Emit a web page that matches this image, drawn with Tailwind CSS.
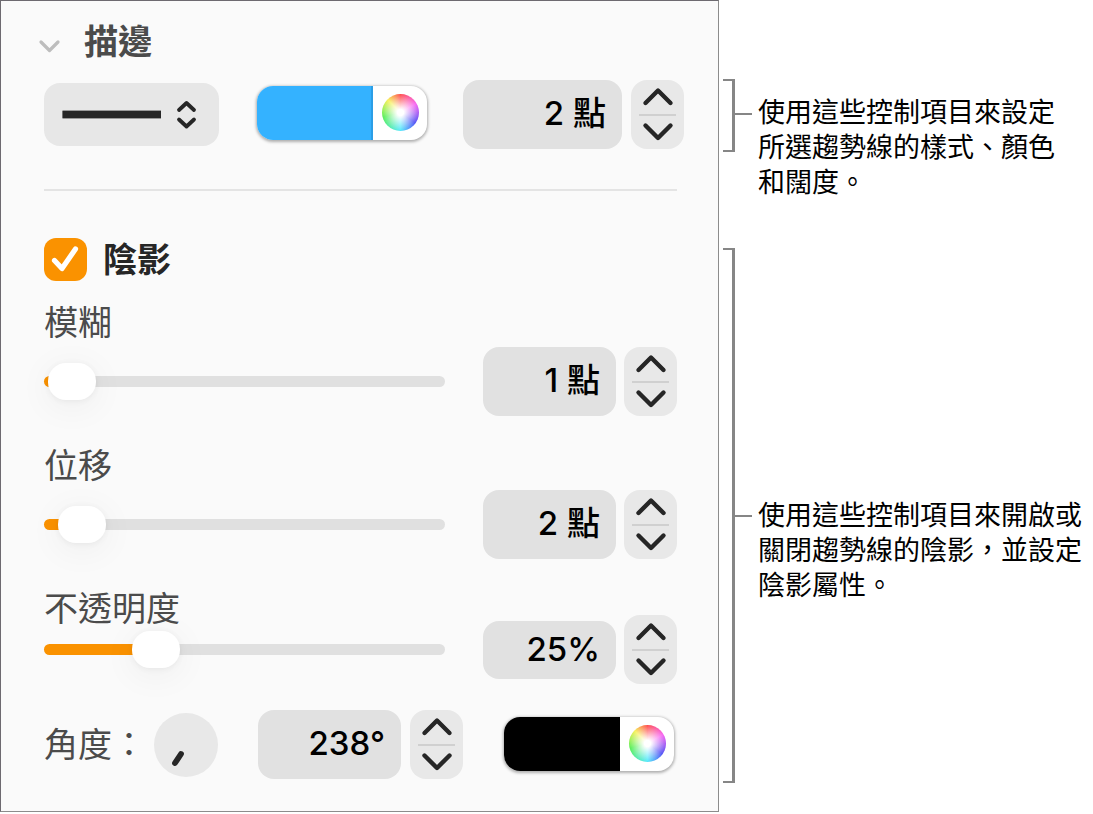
<!DOCTYPE html>
<html lang="zh-Hant-HK">
<head>
  <meta charset="UTF-8" />
  <meta name="viewport" content="width=device-width, initial-scale=1.0" />
  <title>趨勢線控制項目</title>
  <script src="https://cdn.jsdelivr.net/npm/@tailwindcss/browser@4"></script>
</head>
<body class="bg-white font-[Inter,'Noto_Sans_CJK_TC',sans-serif] text-black">
  <svg class="hidden">
    <symbol id="chevron-up" viewBox="0 0 32 20">
      <path d="M3.5 16 L16 3.500 L28.5 16" fill="none" stroke="#262626" stroke-width="4.4" stroke-linecap="round" stroke-linejoin="round" />
    </symbol>
    <symbol id="chevron-down" viewBox="0 0 32 20">
      <path d="M3.5 3.500 L16 16 L28.5 3.500" fill="none" stroke="#262626" stroke-width="4.4" stroke-linecap="round" stroke-linejoin="round" />
    </symbol>
  </svg>

  <div class="flex items-start">
    <main class="min-w-0 flex-1 border border-[#8c8c8c] border-t-[#6d6a70] border-l-[#6d6a70] bg-[#fafafa] pb-[32px] pl-[43px]">

      <!-- Stroke -->
      <section class="pr-[34px]">
        <h2 class="flex h-[79px] items-start pt-4 text-[34px] leading-[50px] font-bold text-[#4b4b4b]">
          <button type="button" class="mt-[15px] mr-[22px] -ml-[7px]" aria-label="收合描邊">
            <svg class="h-[24px] w-[25px]" viewBox="0 0 25 24">
              <path d="M4 10 L12.5 18.5 L21 10" fill="none" stroke="#bdbdbd" stroke-width="3.2" stroke-linecap="round" stroke-linejoin="round" />
            </svg>
          </button>
          描邊
        </h2>
        <div class="flex h-[69px] items-center">
          <div class="relative h-[63px] w-[175px]">
            <select class="size-full appearance-none rounded-2xl bg-[#e7e7e7]" aria-label="線條樣式">
              <option value="solid" aria-label="實線"></option>
            </select>
            <svg class="pointer-events-none absolute inset-0 size-full" viewBox="0 0 175 63">
              <rect x="18.5" y="27" width="98.500" height="9" fill="#262626" opacity=".4" />
              <rect x="18.5" y="28" width="98.500" height="7" fill="#262626" />
              <path d="M135 27 L142.500 20 L150 27 M135 36.500 L142.500 43.500 L150 36.500" fill="none" stroke="#262626" stroke-width="3.800" stroke-linecap="round" stroke-linejoin="round" />
            </svg>
          </div>
          <div class="mb-1 ml-[38px] flex h-[54px] w-[170px] overflow-hidden rounded-2xl bg-white shadow-[0_1px_3px_1px_rgba(0,0,0,0.3)]">
            <input type="color" value="#34b2ff" aria-label="描邊顏色" class="h-full min-w-0 flex-1 appearance-none border-r-2 border-[#2b9ee6] p-0 [&::-webkit-color-swatch]:rounded-none [&::-webkit-color-swatch]:border-0 [&::-webkit-color-swatch-wrapper]:p-0" />
            <button type="button" class="flex w-[54px] items-center justify-center" aria-label="顏色輪盤">
              <span class="size-[37px] rounded-full bg-[radial-gradient(circle,#fff_12%,transparent_72%),conic-gradient(#ff4848,#f85cf0_60deg,#4a4af5_125deg,#4fe8fb_180deg,#50ee50_255deg,#f6f050_315deg,#ff4848)]"></span>
            </button>
          </div>
          <div class="ml-auto flex gap-[9px]">
            <input type="text" value="2 點" aria-label="線條闊度" class="h-[69px] w-[159px] rounded-2xl bg-[#e1e1e1] pr-4 pb-2 text-right text-[33px] font-medium" />
            <div class="flex h-[69px] w-[53px] flex-col items-center rounded-2xl bg-[#e8e8e8]">
              <button type="button" class="flex w-full flex-1 items-center justify-center" aria-label="增加闊度"><svg class="h-[20px] w-[32px]"><use href="#chevron-up" /></svg></button>
              <span class="h-[2px] w-[37px] bg-[#d0d0d0]"></span>
              <button type="button" class="flex w-full flex-1 items-center justify-center" aria-label="減少闊度"><svg class="h-[20px] w-[32px]"><use href="#chevron-down" /></svg></button>
            </div>
          </div>
        </div>
      </section>

      <hr class="mt-10 mr-[41px] border-t-2 border-[#e4e4e4]" />

      <!-- Shadow -->
      <section class="mt-[47px] pr-[41px]">
        <div class="flex h-[43px] items-center gap-4">
          <div class="relative size-[43px]">
            <input id="shadow" type="checkbox" checked class="size-full appearance-none rounded-xl bg-[#fa9200]" />
            <svg class="pointer-events-none absolute inset-0 size-full" viewBox="0 0 43 43">
              <path d="M10.500 22.500 L18 30.500 L31.500 11" fill="none" stroke="#fff" stroke-width="5.200" stroke-linecap="round" stroke-linejoin="round" />
            </svg>
          </div>
          <label for="shadow" class="text-[34px] leading-[43px] font-bold text-[#262626]">陰影</label>
        </div>

        <div class="mt-[22px] space-y-[30px]">
          <div class="flex items-end gap-[38px]">
            <div class="flex flex-1 flex-col gap-5 pb-4">
              <label for="blur" class="text-[34px] leading-[40px] text-[#4b4b4b]">模糊</label>
              <input id="blur" type="range" min="0" max="100" value="1" style="--fill: 3%" class="h-[37px] w-full appearance-none bg-transparent [&::-webkit-slider-runnable-track]:h-[11px] [&::-webkit-slider-runnable-track]:rounded-full [&::-webkit-slider-runnable-track]:bg-[linear-gradient(to_right,#fa9200_var(--fill),#e0e0e0_var(--fill))] [&::-webkit-slider-thumb]:mt-[-13px] [&::-webkit-slider-thumb]:h-[37px] [&::-webkit-slider-thumb]:w-[48px] [&::-webkit-slider-thumb]:appearance-none [&::-webkit-slider-thumb]:rounded-[18px] [&::-webkit-slider-thumb]:bg-white [&::-webkit-slider-thumb]:shadow-[0_1px_6px_rgba(0,0,0,0.06),0_6px_36px_rgba(0,0,0,0.06)]" />
            </div>
            <div class="flex items-center gap-2">
              <input type="text" value="1 點" aria-label="模糊數值" class="h-[69px] w-[133px] rounded-2xl bg-[#e1e1e1] pr-4 pb-2 text-right text-[33px] font-medium" />
              <div class="flex h-[69px] w-[53px] flex-col items-center rounded-2xl bg-[#e8e8e8]">
                <button type="button" class="flex w-full flex-1 items-center justify-center" aria-label="增加模糊"><svg class="h-[20px] w-[32px]"><use href="#chevron-up" /></svg></button>
                <span class="h-[2px] w-[37px] bg-[#d0d0d0]"></span>
                <button type="button" class="flex w-full flex-1 items-center justify-center" aria-label="減少模糊"><svg class="h-[20px] w-[32px]"><use href="#chevron-down" /></svg></button>
              </div>
            </div>
          </div>

          <div class="flex items-end gap-[38px]">
            <div class="flex flex-1 flex-col gap-5 pb-4">
              <label for="offset" class="text-[34px] leading-[40px] text-[#4b4b4b]">位移</label>
              <input id="offset" type="range" min="0" max="50" value="2" style="--fill: 8%" class="h-[37px] w-full appearance-none bg-transparent [&::-webkit-slider-runnable-track]:h-[11px] [&::-webkit-slider-runnable-track]:rounded-full [&::-webkit-slider-runnable-track]:bg-[linear-gradient(to_right,#fa9200_var(--fill),#e0e0e0_var(--fill))] [&::-webkit-slider-thumb]:mt-[-13px] [&::-webkit-slider-thumb]:h-[37px] [&::-webkit-slider-thumb]:w-[48px] [&::-webkit-slider-thumb]:appearance-none [&::-webkit-slider-thumb]:rounded-[18px] [&::-webkit-slider-thumb]:bg-white [&::-webkit-slider-thumb]:shadow-[0_1px_6px_rgba(0,0,0,0.06),0_6px_36px_rgba(0,0,0,0.06)]" />
            </div>
            <div class="flex items-center gap-2">
              <input type="text" value="2 點" aria-label="位移數值" class="h-[69px] w-[133px] rounded-2xl bg-[#e1e1e1] pr-4 pb-2 text-right text-[33px] font-medium" />
              <div class="flex h-[69px] w-[53px] flex-col items-center rounded-2xl bg-[#e8e8e8]">
                <button type="button" class="flex w-full flex-1 items-center justify-center" aria-label="增加位移"><svg class="h-[20px] w-[32px]"><use href="#chevron-up" /></svg></button>
                <span class="h-[2px] w-[37px] bg-[#d0d0d0]"></span>
                <button type="button" class="flex w-full flex-1 items-center justify-center" aria-label="減少位移"><svg class="h-[20px] w-[32px]"><use href="#chevron-down" /></svg></button>
              </div>
            </div>
          </div>

          <div class="flex items-end gap-[38px]">
            <div class="flex flex-1 flex-col gap-[2px] pb-4">
              <label for="opacity" class="text-[34px] leading-[40px] text-[#4b4b4b]">不透明度</label>
              <input id="opacity" type="range" min="0" max="100" value="25" style="--fill: 28%" class="h-[37px] w-full appearance-none bg-transparent [&::-webkit-slider-runnable-track]:h-[11px] [&::-webkit-slider-runnable-track]:rounded-full [&::-webkit-slider-runnable-track]:bg-[linear-gradient(to_right,#fa9200_var(--fill),#e0e0e0_var(--fill))] [&::-webkit-slider-thumb]:mt-[-13px] [&::-webkit-slider-thumb]:h-[37px] [&::-webkit-slider-thumb]:w-[48px] [&::-webkit-slider-thumb]:appearance-none [&::-webkit-slider-thumb]:rounded-[18px] [&::-webkit-slider-thumb]:bg-white [&::-webkit-slider-thumb]:shadow-[0_1px_6px_rgba(0,0,0,0.06),0_6px_36px_rgba(0,0,0,0.06)]" />
            </div>
            <div class="flex items-center gap-2">
              <input type="text" value="25%" aria-label="不透明度數值" class="h-[58px] w-[133px] rounded-2xl bg-[#e1e1e1] pr-4 pb-[2px] text-right text-[33px] font-medium" />
              <div class="flex h-[69px] w-[53px] flex-col items-center rounded-2xl bg-[#e8e8e8]">
                <button type="button" class="flex w-full flex-1 items-center justify-center" aria-label="增加不透明度"><svg class="h-[20px] w-[32px]"><use href="#chevron-up" /></svg></button>
                <span class="h-[2px] w-[37px] bg-[#d0d0d0]"></span>
                <button type="button" class="flex w-full flex-1 items-center justify-center" aria-label="減少不透明度"><svg class="h-[20px] w-[32px]"><use href="#chevron-down" /></svg></button>
              </div>
            </div>
          </div>
        </div>

        <div class="mt-[26px] flex h-[69px] items-center">
          <label for="angle" class="text-[34px] leading-[40px] text-[#4b4b4b]">角度：</label>
          <button type="button" class="ml-2 size-[64px] rounded-full bg-[#e8e8e8]" aria-label="角度轉盤">
            <svg class="size-full" viewBox="0 0 64 64">
              <path d="M21 50 L27 41" fill="none" stroke="#262626" stroke-width="5.800" stroke-linecap="round" />
            </svg>
          </button>
          <div class="ml-10 flex gap-[9px]">
            <input id="angle" type="text" value="238°" class="h-[69px] w-[143px] rounded-2xl bg-[#e1e1e1] pr-4 pb-1 text-right text-[33px] font-medium" />
            <div class="flex h-[69px] w-[53px] flex-col items-center rounded-2xl bg-[#e8e8e8]">
              <button type="button" class="flex w-full flex-1 items-center justify-center" aria-label="增加角度"><svg class="h-[20px] w-[32px]"><use href="#chevron-up" /></svg></button>
              <span class="h-[2px] w-[37px] bg-[#d0d0d0]"></span>
              <button type="button" class="flex w-full flex-1 items-center justify-center" aria-label="減少角度"><svg class="h-[20px] w-[32px]"><use href="#chevron-down" /></svg></button>
            </div>
          </div>
          <div class="mr-[3px] mb-[2px] ml-auto flex h-[54px] w-[170px] overflow-hidden rounded-2xl bg-white shadow-[0_1px_3px_1px_rgba(0,0,0,0.3)]">
            <input type="color" value="#000000" aria-label="陰影顏色" class="h-full min-w-0 flex-1 appearance-none p-0 [&::-webkit-color-swatch]:rounded-none [&::-webkit-color-swatch]:border-0 [&::-webkit-color-swatch-wrapper]:p-0" />
            <button type="button" class="flex w-[54px] items-center justify-center" aria-label="顏色輪盤">
              <span class="size-[37px] rounded-full bg-[radial-gradient(circle,#fff_12%,transparent_72%),conic-gradient(#ff4848,#f85cf0_60deg,#4a4af5_125deg,#4fe8fb_180deg,#50ee50_255deg,#f6f050_315deg,#ff4848)]"></span>
            </button>
          </div>
        </div>
      </section>
    </main>

    <!-- Callouts -->
    <aside class="w-[374px] shrink-0 pt-[79px] pl-[4px] font-['Noto_Sans_CJK_TC',sans-serif] text-[27px] leading-[35px]">
      <div class="flex items-start">
        <span class="h-[73px] w-3 border-y-2 border-r-3 border-[#868686]"></span>
        <span class="mt-[34px] mr-[6px] h-[2px] w-[17px] bg-[#868686]"></span>
        <p class="mt-[14px] whitespace-nowrap">使用這些控制項目來設定<br />所選趨勢線的樣式、顏色<br />和闊度。</p>
      </div>
      <div class="mt-[50px] flex items-start">
        <span class="h-[535px] w-3 border-y-2 border-r-3 border-[#868686]"></span>
        <span class="mt-[267px] mr-[6px] h-[2px] w-[17px] bg-[#868686]"></span>
        <p class="mt-[248px] whitespace-nowrap">使用這些控制項目來開啟或<br />關閉趨勢線的陰影，並設定<br />陰影屬性。</p>
      </div>
    </aside>
  </div>
</body>
</html>
